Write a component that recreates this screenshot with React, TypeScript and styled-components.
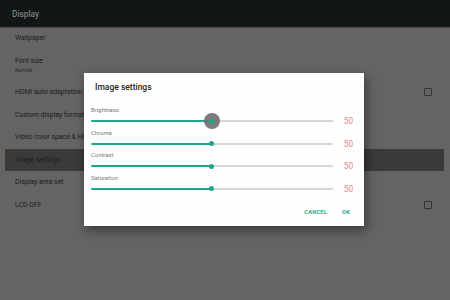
import React from "react";
import styled, { createGlobalStyle } from "styled-components";

const Global = createGlobalStyle`
  html, body { margin: 0; padding: 0; }
  body { font-family: Roboto, "Noto Sans", sans-serif; }
  #root { width: 450px; height: 300px; }
`;

const Screen = styled.div`
  position: relative;
  width: 450px;
  height: 300px;
  background: #646464;
  overflow: hidden;
`;

const Header = styled.div`
  height: 27px;
  background: #111716;
  display: flex;
  align-items: center;
  padding-left: 12px;
  color: #7d8282;
  font-size: 8.3px;
  font-weight: 500;
  box-shadow: 0 1px 1px rgba(0, 0, 0, 0.25);
`;

const List = styled.div`
  display: flex;
  flex-direction: column;
  padding: 0 6px 0 5px;
`;

const Row = styled.div<{ $tall?: boolean; $active?: boolean }>`
  height: ${(p) => (p.$tall ? "31.5px" : "22.5px")};
  display: flex;
  align-items: center;
  justify-content: space-between;
  padding: 0 12px 0 10px;
  background: ${(p) => (p.$active ? "#3b3a39" : "transparent")};
`;

const RowText = styled.div`
  display: flex;
  flex-direction: column;
  color: #1c1c1c;
  font-size: 6.9px;
`;

const Sub = styled.span`
  font-size: 5.2px;
  color: #2a2a2a;
  margin-top: 2px;
`;

const Check = styled.div`
  width: 6px;
  height: 6px;
  border: 1.3px solid #333;
  border-radius: 1px;
`;

const Dialog = styled.div`
  position: absolute;
  left: 84px;
  top: 73px;
  width: 280px;
  height: 153px;
  background: #fefefe;
  box-shadow: 2px 4px 10px rgba(0, 0, 0, 0.45);
  display: flex;
  flex-direction: column;
  padding: 0 11px 0 7px;
  box-sizing: border-box;
`;

const Title = styled.div`
  height: 32px;
  display: flex;
  align-items: center;
  padding-left: 4px;
  padding-bottom: 4px;
  box-sizing: border-box;
  font-size: 8.5px;
  font-weight: 500;
  color: #262626;
`;

const SliderBlock = styled.div`
  height: 22.5px;
  display: flex;
  flex-direction: column;
`;

const Label = styled.div`
  height: 10px;
  line-height: 10px;
  font-size: 5.9px;
  color: #7a7a7a;
`;

const TrackRow = styled.div`
  height: 12.5px;
  display: flex;
  align-items: center;
`;

const Track = styled.div`
  position: relative;
  width: 242px;
  height: 2px;
  border-radius: 1px;
`;

const Halo = styled.div`
  position: absolute;
  top: 50%;
  width: 16px;
  height: 16px;
  margin: -8px 0 0 -8px;
  border-radius: 50%;
  background: rgba(110, 110, 110, 0.9);
`;

const Thumb = styled.div`
  position: absolute;
  top: 50%;
  width: 5px;
  height: 5px;
  margin: -2.5px 0 0 -2.5px;
  border-radius: 50%;
  background: #1fa58a;
`;

const Value = styled.div`
  margin-left: 11px;
  font-size: 8.2px;
  color: #e5838f;
`;

const Actions = styled.div`
  margin-top: auto;
  height: 27px;
  display: flex;
  justify-content: flex-end;
  align-items: center;
  gap: 15px;
  padding-right: 3px;
  padding-bottom: 1px;
`;

const Btn = styled.div`
  font-size: 5.7px;
  font-weight: 700;
  color: #2aa98c;
  letter-spacing: 0.2px;
`;

const items: { t: string; sub?: string; check?: boolean; active?: boolean }[] = [
  { t: "Wallpaper" },
  { t: "Font size", sub: "Normal" },
  { t: "HDMI auto adaptation", check: true },
  { t: "Custom display format" },
  { t: "Video color space & HDR" },
  { t: "Image settings", active: true },
  { t: "Display area set" },
  { t: "LCD OFF", check: true },
];

const sliders = ["Brightness", "Chroma", "Contrast", "Saturation"];

export default function App() {
  return (
    <>
      <Global />
      <Screen>
        <Header>Display</Header>
        <List>
          {items.map((it) => (
            <Row key={it.t} $tall={!!it.sub} $active={it.active}>
              <RowText>
                {it.t}
                {it.sub && <Sub>{it.sub}</Sub>}
              </RowText>
              {it.check && <Check />}
            </Row>
          ))}
        </List>
        <Dialog>
          <Title>Image settings</Title>
          {sliders.map((s, i) => {
            const pct = 50;
            return (
              <SliderBlock key={s}>
                <Label>{s}</Label>
                <TrackRow>
                  <Track
                    style={{
                      background: `linear-gradient(to right, #1fa58a ${pct}%, #d6d6d6 ${pct}%)`,
                    }}
                  >
                    {i === 0 && <Halo style={{ left: `${pct}%` }} />}
                    <Thumb style={{ left: `${pct}%` }} />
                  </Track>
                  <Value>50</Value>
                </TrackRow>
              </SliderBlock>
            );
          })}
          <Actions>
            <Btn>CANCEL</Btn>
            <Btn>OK</Btn>
          </Actions>
        </Dialog>
      </Screen>
    </>
  );
}
